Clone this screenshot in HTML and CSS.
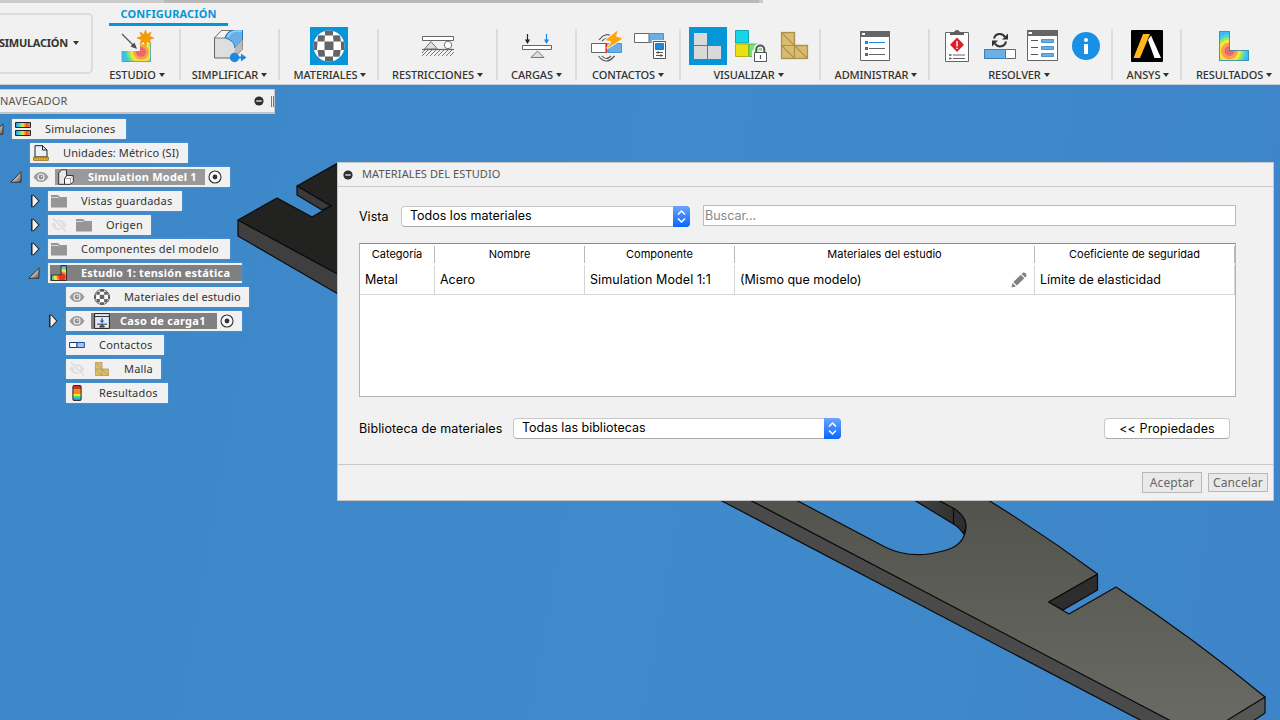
FILE: index.html
```html
<!DOCTYPE html>
<html lang="es">
<head>
<meta charset="utf-8">
<title>Simulación</title>
<link rel="stylesheet" href="styles.css">
</head>
<body>
<svg class="defs" width="0" height="0" aria-hidden="true">
  <defs>
    <linearGradient id="face" x1="0" y1="0" x2="0" y2="1"><stop offset="0" stop-color="#53534e"/><stop offset="1" stop-color="#6a6a64"/></linearGradient>
    <linearGradient id="wall" x1="0" y1="0" x2="1" y2="0"><stop offset="0" stop-color="#444"/><stop offset="1" stop-color="#2c2c2c"/></linearGradient>
    <linearGradient id="tri" x1="0" y1="0" x2="1" y2="1"><stop offset=".3" stop-color="#eee"/><stop offset="1" stop-color="#555"/></linearGradient>
    <linearGradient id="rain" x1="0" y1="0" x2="1" y2="0"><stop offset="0" stop-color="#1f8fe8"/><stop offset=".25" stop-color="#40d8c8"/><stop offset=".5" stop-color="#f3e622"/><stop offset=".75" stop-color="#f04a20"/><stop offset="1" stop-color="#f9a040"/></linearGradient>
    <symbol id="eye" viewBox="0 0 16 12"><path d="M.5 6C3 2 5.500 1 8 1s5 1 7.500 5C13 10 10.500 11 8 11S3 10 .5 6z" fill="#9a9a9a"/><circle cx="8" cy="6" r="3.600" fill="#f1f1f1"/><circle cx="8" cy="6" r="2.400" fill="#8e8e8e"/><circle cx="8.600" cy="5.400" r=".8" fill="#eee"/></symbol>
    <symbol id="eyeoff" viewBox="0 0 16 14"><path d="M.5 7C3 3 5.500 2 8 2s5 1 7.500 5C13 11 10.500 12 8 12S3 11 .5 7z" fill="#dedede"/><circle cx="8" cy="7" r="3.300" fill="#f1f1f1"/><circle cx="8" cy="7" r="1.800" fill="#dedede"/><path d="M2 1L14 13" stroke="#f1f1f1" stroke-width="3"/><path d="M2 .5L15 13.500" stroke="#dadada" stroke-width="1.300"/></symbol>
    <symbol id="folder" viewBox="0 0 16 14"><path d="M0 1H7L9 3H16V13.500H0z" fill="#969696"/><path d="M0 3.500H7.500" stroke="#d6d6d6"/></symbol>
    <symbol id="closed" viewBox="0 0 10 14"><path d="M1.500 1.200V12.800H3.500L9 7L3.500 1.200z" fill="#f2f2f2" stroke="#333" stroke-width="1.100"/><path d="M2 1.500V12.500" stroke="#222" stroke-width="1"/></symbol>
    <symbol id="open" viewBox="0 0 12 12"><path d="M11 .8V11.200H.8z" fill="url(#tri)" stroke="#333"/></symbol>
    <symbol id="radio" viewBox="0 0 14 14"><circle cx="7" cy="7" r="6" fill="#fafafa" stroke="#333" stroke-width="1.100"/><circle cx="7" cy="7" r="2.400" fill="#333"/></symbol>
    <symbol id="minus" viewBox="0 0 10 10"><circle cx="5" cy="5" r="4.600" fill="#2e2e2e"/><path d="M2.300 5H7.700" stroke="#f1f1f1" stroke-width="1.300"/></symbol>
    <symbol id="ball" viewBox="0 0 32 32">
      <clipPath id="disc"><circle cx="16" cy="16" r="15.500"/></clipPath>
      <circle cx="16" cy="16" r="15.500" fill="#fff"/>
      <g clip-path="url(#disc)" fill="#656565">
        <path d="M12 0H20V5.500H12zM5 5.500Q8 5 12 5.500L11.500 11.500H4.500zM20 5.500Q24 5 27 5.500L28 11.500H20.500z"/>
        <path d="M0 11.500H4.500L4 20H0zM11.500 11.500H20.500V20H11.500zM28 11.500H32V20H28z"/>
        <path d="M4.500 20H11.500L12 26.500Q8 27 5.500 26.500zM20.500 20H27.800L26.500 26.500Q24 27 20 26.500zM12 26.500H20V32H12z"/>
      </g>
    </symbol>
    <symbol id="mesh" viewBox="0 0 28 28"><path d="M1 1H14V14H27V27H1z" fill="#d9bd6c" stroke="#ad9150" stroke-width="1.400"/><path d="M1 1L27 27M1 14H14V27M1 14L14 27M14 1" fill="none" stroke="#ad9150" stroke-width="1.200"/></symbol>
  </defs>
</svg>

<header class="toolbar">
  <div class="strip"><i></i><b></b></div>
  <button class="workspace">SIMULACIÓN <span class="caret"></span></button>
  <div class="ribbon">
    <div class="tab">CONFIGURACIÓN</div>
    <div class="groups">
      <section class="group">
        <div class="icons"><svg viewBox="0 0 38 38">
          <clipPath id="l1"><path d="M4 24H22V17H33V35H4z"/></clipPath>
          <g clip-path="url(#l1)"><path d="M4 16H33V35H4z" fill="#35c3f0"/><circle cx="23" cy="25" r="15" fill="#5fdc9a"/><circle cx="23" cy="25" r="12.500" fill="#b7e34b"/><circle cx="23" cy="25" r="10.500" fill="#f4e23c"/><circle cx="23" cy="25" r="7.800" fill="#f9a04f"/><circle cx="23" cy="25" r="5" fill="#ea6868"/></g>
          <path d="M4 24V34.500H32.500V17" fill="none" stroke="#4aa0c0" stroke-width=".8"/>
          <path d="M4 7L17 20" stroke="#555" stroke-width="1.200"/><path d="M19 22L12.500 19.500L16.500 15.500z" fill="#4d4d4d"/>
          <path d="M27.500 3l1.600 4.500 4-2.500-1.600 4.300 4.500 1.700-4.500 1.700 1.600 4.300-4-2.500-1.600 4.500-1.600-4.500-4 2.500 1.600-4.300-4.500-1.700 4.500-1.700-1.600-4.300 4 2.500z" fill="#f59c00" stroke="#dd8500" stroke-width=".5"/>
        </svg></div>
        <h3>ESTUDIO<span class="caret"></span></h3>
      </section>
      <section class="group">
        <div class="icons"><svg viewBox="0 0 38 38">
          <path d="M3.500 11L10.500 3.500H31.500V22L23 31H3.500z" fill="#dedede" stroke="#666"/>
          <path d="M3.500 11L10.500 3.500H22Q15 5 14 11z" fill="#f5f5f5" stroke="#666" stroke-width=".8"/>
          <path d="M14 11Q16 4 22 3.500H31.500V12L24 21Q23 13 14 11z" fill="#69b0e8" stroke="#1d74b8" stroke-width=".9"/>
          <path d="M24 21L31.500 12V22L23 31z" fill="#bbb"/><path d="M17 10Q19 5 24 4H31" fill="none" stroke="#a5d2f5" stroke-width="1.500"/>
          <circle cx="23.500" cy="30.500" r="4.700" fill="#1c88e0"/><path d="M26 29.500H30V26.500L35.500 30.500L30 34.500V31.500H26z" fill="#1c88e0"/>
        </svg></div>
        <h3>SIMPLIFICAR<span class="caret"></span></h3>
      </section>
      <section class="group">
        <div class="icons"><svg class="on" viewBox="0 0 38 38"><use href="#ball" x="3" y="3" width="32" height="32"/></svg></div>
        <h3 class="right">MATERIALES<span class="caret"></span></h3>
      </section>
      <section class="group">
        <div class="icons"><svg viewBox="0 0 38 38">
          <path d="M3.500 9.500H34.500V13.500H3.500z" fill="#fff" stroke="#666"/>
          <path d="M12 14.500L18.500 22H5.500z" fill="#ddd" stroke="#777"/><circle cx="29" cy="18" r="3.700" fill="#fff" stroke="#777"/>
          <path d="M3 22.500H35" stroke="#666" stroke-width="1.200"/>
          <path d="M3 26l3-3M3 29l6-6M7 29l6-6M11 29l6-6M15 29l6-6M19 29l6-6M23 29l6-6M27 29l6-6M31 29l4-4" stroke="#777"/>
        </svg></div>
        <h3>RESTRICCIONES<span class="caret"></span></h3>
      </section>
      <section class="group">
        <div class="icons"><svg viewBox="0 0 38 38">
          <path d="M4.500 18.500H33.500V22.500H4.500z" fill="#fff" stroke="#666"/><path d="M19.500 24L26 30.500H13z" fill="#ddd" stroke="#777"/>
          <path d="M9.500 7V14" stroke="#222" stroke-width="1.200"/><path d="M7 12.500H12L9.500 17z" fill="#222"/>
          <path d="M28.500 7V14" stroke="#1c88e0" stroke-width="1.200"/><path d="M26 12.500H31L28.500 17z" fill="#1c88e0"/>
        </svg></div>
        <h3>CARGAS<span class="caret"></span></h3>
      </section>
      <section class="group">
        <div class="icons"><svg viewBox="0 0 38 38">
          <path d="M3.500 16.500H18V25.500H3.500z" fill="#fff" stroke="#666"/><path d="M20 16.500H33.500V25.500H20z" fill="#69b0e8" stroke="#4b93cc"/>
          <path d="M18.600 16V26" stroke="#d82424" stroke-width="1.400"/>
          <path d="M11 13Q18 4 25 10M14 14Q18 10 22 12M10.500 29Q18 39 26.500 29M14 29Q18 34 23 29" fill="none" stroke="#555" stroke-width="1.200"/>
          <path d="M29.500 3.500L17.500 13L23.500 14.500L19 21.500L34.500 11.500L28 9.500z" fill="#ffa50a" stroke="#f1f1f1" stroke-width="2" paint-order="stroke"/>
        </svg><svg viewBox="0 0 38 38">
          <path d="M3.500 6.500H18V15.500H3.500z" fill="#fff" stroke="#666"/><path d="M18.500 6.500H32.500V15.500H18.500z" fill="#69b0e8" stroke="#4b93cc"/>
          <path d="M21 13H36V33H21z" fill="#f1f1f1"/><path d="M22.500 14.500H34.500V31.500H22.500z" fill="#fff" stroke="#555"/><path d="M24.500 16.500H32.500V22.500H24.500z" fill="#1c88e0" stroke="#1664a8" stroke-width=".8"/>
          <path d="M25 25.500H32M25 28.500H32M27 24V27M30 27V30" stroke="#555"/>
        </svg></div>
        <h3>CONTACTOS<span class="caret"></span></h3>
      </section>
      <section class="group wide">
        <div class="icons"><svg class="on" viewBox="0 0 38 38"><path d="M5 6H18V18H5zM5 19H18V32H5zM19 19H32V32H19z" fill="#d9d9d9"/></svg><svg viewBox="0 0 38 38">
          <path d="M3.500 3.500H16.500V16H3.500z" fill="#18d4e8" stroke="#12a5b8"/><path d="M3.500 17H16.500V29.500H3.500z" fill="#e8e015" stroke="#b8b010"/><path d="M17 17H29.500V29.500H17z" fill="#72e672" stroke="#54b854"/>
          <path d="M21.500 25V34.500H35V25z" fill="#fff" stroke="#f1f1f1" stroke-width="3"/><path d="M24 26V22.500a4.200 4.200 0 0 1 8.400 0V26" fill="none" stroke="#f1f1f1" stroke-width="5"/><path d="M24.300 26V22.500a4 4 0 0 1 8 0V26" fill="none" stroke="#555" stroke-width="2"/><path d="M22.500 25.500H34.500V34.500H22.500z" fill="#fff" stroke="#555"/><path d="M28.500 28V32" stroke="#555" stroke-width="1.200"/>
        </svg><svg viewBox="0 0 38 38"><use href="#mesh" x="5.500" y="4.500" width="28" height="28"/></svg></div>
        <h3>VISUALIZAR<span class="caret"></span></h3>
      </section>
      <section class="group">
        <div class="icons"><svg viewBox="0 0 38 38">
          <path d="M4.500 4.500H33.500V33.500H4.500z" fill="#fff" stroke="#666"/><path d="M4 4H34V10H4z" fill="#666"/><path d="M6 6H9V8H6z" fill="#fff"/>
          <path d="M9 14H12V17H9z" fill="#1c88e0"/><path d="M9 20H12V23H9zM9 26H12V29H9z" fill="#666"/><path d="M13 15.500H29" stroke="#1c88e0"/><path d="M13 21.500H29M13 27.500H29" stroke="#666"/>
        </svg></div>
        <h3 class="right">ADMINISTRAR<span class="caret"></span></h3>
      </section>
      <section class="group wide">
        <div class="icons"><svg viewBox="0 0 38 38">
          <path d="M7.500 5.500H30.500V34.500H7.500z" fill="#fff" stroke="#666"/><path d="M12 8V6L16 5Q17 3 19 3T22 5L26 6V8z" fill="#5e5e5e"/>
          <path d="M19 10.500L26 17.800L19 25L12 17.800z" fill="#de1f26"/><path d="M19 14V19.500M19 20.800V22" stroke="#fff" stroke-width="1.500"/><path d="M11 28H13.500M11 31.500H13.500" stroke="#555" stroke-width="1.500"/><path d="M15 28H27M15 31.500H27" stroke="#666"/>
        </svg><svg viewBox="0 0 38 38">
          <path d="M13 11.500A6 6 0 0 1 24 10M25 14.500A6 6 0 0 1 14 16.500" fill="none" stroke="#333" stroke-width="2"/><path d="M27 6.500V12.500H21zM11 19.500V13.500H17z" fill="#333"/>
          <path d="M3.500 22.500H34.500V31.500H3.500z" fill="#fff" stroke="#666"/><path d="M3.500 22.500H24.500V31.500H3.500z" fill="#69b0e8" stroke="#3d7fb5"/>
        </svg><svg viewBox="0 0 38 38">
          <path d="M3.500 3.500H33.500V33.500H3.500z" fill="#fff" stroke="#666"/><path d="M3 3H34V9H3z" fill="#666"/><path d="M4.500 5H8V7H4.500z" fill="#fff"/>
          <path d="M7 13.500H14M7 20.500H14M7 27.500H14" stroke="#555"/><path d="M17.500 12.500H29.500V15.500H17.500zM17.500 19.500H29.500V22.500H17.500zM17.500 26.500H29.500V29.500H17.500z" fill="#69b0e8" stroke="#4b93cc"/>
        </svg><svg viewBox="0 0 38 38"><circle cx="19" cy="19" r="14" fill="#1a8fe6"/><circle cx="19" cy="13" r="2" fill="#fff"/><path d="M17 17H21V27H17z" fill="#fff"/></svg></div>
        <h3>RESOLVER<span class="caret"></span></h3>
      </section>
      <section class="group">
        <div class="icons"><svg viewBox="0 0 38 38"><rect x="3" y="3" width="32" height="32" rx="1" fill="#000"/><path d="M15 7H22L12 31H5.500z" fill="#ffb71b"/><path d="M20 13L23 8.500L33 31H26.500z" fill="#fff"/></svg></div>
        <h3 class="right">ANSYS<span class="caret"></span></h3>
      </section>
      <section class="group">
        <div class="icons"><svg viewBox="0 0 38 38">
          <clipPath id="l2"><path d="M4 4H15V23H34V34H4z"/></clipPath>
          <g clip-path="url(#l2)"><path d="M4 4H34V34H4z" fill="#43b7f4"/><circle cx="14.500" cy="24" r="17" fill="#3fd8e0"/><circle cx="14.500" cy="24" r="14" fill="#9fe45c"/><circle cx="14.500" cy="24" r="11.500" fill="#f4e83c"/><circle cx="14.500" cy="24" r="8.500" fill="#f9a04f"/><circle cx="14.500" cy="24" r="5" fill="#ea6868"/></g>
          <path d="M4.500 4.500H14.500V23.500H33.500V33.500H4.500z" fill="none" stroke="#3a8cab" stroke-width=".9"/>
        </svg></div>
        <h3>RESULTADOS<span class="caret"></span></h3>
      </section>
    </div>
  </div>
</header>

<main class="canvas">
  <svg class="model" viewBox="0 85 1280 635" width="1280" height="635">
    <clipPath id="visible"><path d="M0 85H337V720H0zM337 500H1280V720H337z"/></clipPath>
    <g clip-path="url(#visible)"><g stroke="#0b0b0b" stroke-width="1.200" stroke-linejoin="round">
      <path d="M238 220L345 278V298L238 236z" fill="#3f3f3f"/>
      <path d="M238 220L277 198L312 217L331 206L297 186L345 159V278z" fill="#222220"/>
      <path d="M297 186V195L322 210L331 206z" fill="#3a3a3a"/>
      <path d="M914 500L953.500 524Q960 528 963.500 534L966 527Q966 514 953 508L938 499z" fill="url(#wall)"/>
      <path d="M953.500 508V524" fill="none"/>
      <path d="M720 500L1142 721H1172L750 500z" fill="#4a4a4a"/>
      <path d="M1097.500 574V590L1063 610L1048.500 602z" fill="#2d2d2d"/>
      <path d="M1265 697V713L1250 723H1220z" fill="#565654"/>
      <path d="M750 500L1171 721H1226L1265 697Q1196 640 1116 587L1069 614L1048.500 602L1097.500 574Q1045 535 988 500H938L955 509Q967 518 966 527Q965 546 943 551Q911 560 885 547Q870 539 796 500z" fill="url(#face)"/>
    </g></g>
  </svg>

  <aside class="browser">
    <div class="browser-head"><span>NAVEGADOR</span><svg class="dot"><use href="#minus"/></svg><i></i></div>
    <ul class="tree">
      <li class="d0"><svg class="tw open"><use href="#open"/></svg><div class="chip w114"><svg class="ic" viewBox="0 0 16 16"><path d="M.5 1.500H15.500V6.500H.5zM.5 9.500H15.500V14.500H.5z" fill="url(#rain)" stroke="#223"/></svg><span>Simulaciones</span></div></li>
      <li class="d1"><span class="tw"></span><div class="chip w158"><svg class="ic" viewBox="0 0 16 16"><path d="M2 .7H9.500L14 5V12H2z" fill="#eaf0f8" stroke="#222"/><path d="M9.500 .7V5H14" fill="none" stroke="#222"/><path d="M.7 12H15.300V15.300H.7z" fill="#f5b921" stroke="#7c5400" stroke-width=".8"/><path d="M3 12.500v1.500M5.500 12.500v1.500M8 12.500v1.500M10.500 12.500v1.500M13 12.500v1.500" stroke="#7c5400" stroke-width=".6"/></svg><span class="tight">Unidades: Métrico (SI)</span></div></li>
      <li class="d1"><svg class="tw open"><use href="#open"/></svg><div class="chip w200"><svg class="eye"><use href="#eye"/></svg><div class="sel s150"><svg class="ic" viewBox="0 0 16 16"><path d="M.7 4L3.500 .8H8.500V6.500L6.500 15.300H.7z" fill="#e8e8e8" stroke="#333"/><path d="M6.500 9.500L9 6.500H15.300V12.500L12.500 15.300H6.500z" fill="#fff" stroke="#333"/><path d="M6.500 9.500H12.500L15.300 6.500M12.500 9.500V15" fill="none" stroke="#777" stroke-width=".7"/></svg><b>Simulation Model 1</b></div><svg class="rad"><use href="#radio"/></svg></div></li>
      <li class="d2"><svg class="tw"><use href="#closed"/></svg><div class="chip w134"><svg class="ic"><use href="#folder"/></svg><span>Vistas guardadas</span></div></li>
      <li class="d2"><svg class="tw"><use href="#closed"/></svg><div class="chip w103"><svg class="eye"><use href="#eyeoff"/></svg><svg class="ic second"><use href="#folder"/></svg><span>Origen</span></div></li>
      <li class="d2"><svg class="tw"><use href="#closed"/></svg><div class="chip w182"><svg class="ic"><use href="#folder"/></svg><span>Componentes del modelo</span></div></li>
      <li class="d2"><svg class="tw open"><use href="#open"/></svg><div class="chip w194 full"><div class="sel"><svg class="ic" viewBox="0 0 16 16"><clipPath id="l3"><path d="M10 .5H15.500V15.500H.5V10H10z"/></clipPath><g clip-path="url(#l3)"><path d="M0 0H16V16H0z" fill="#2d9ce8"/><circle cx="11" cy="12" r="10" fill="#4fd8b8"/><circle cx="11" cy="12" r="8" fill="#f5e72d"/><circle cx="11" cy="12" r="5.500" fill="#f98a2d"/><circle cx="11" cy="12" r="3.500" fill="#ee2e24"/></g><path d="M10 .5H15.500V15.500H.5V10H10z" fill="none" stroke="#333"/></svg><b>Estudio 1: tensión estática</b></div></div></li>
      <li class="d3"><span class="tw"></span><div class="chip w183"><svg class="eye"><use href="#eye"/></svg><svg class="ic second" viewBox="0 0 16 16"><use href="#ball" width="16" height="16"/><circle cx="8" cy="8" r="7.500" fill="none" stroke="#444" stroke-width=".8"/></svg><span class="tight">Materiales del estudio</span></div></li>
      <li class="d3"><svg class="tw"><use href="#closed"/></svg><div class="chip w176"><svg class="eye"><use href="#eye"/></svg><div class="sel s126"><svg class="ic" viewBox="0 0 16 16"><path d="M.6 .6H15.400V15.400H.6z" fill="#e4e8f2" stroke="#222"/><path d="M1 3.500H15" stroke="#333"/><path d="M8 5V9" stroke="#1c58c8" stroke-width="1.300"/><path d="M5.800 7.500H10.200L8 10.300z" fill="#1c58c8"/><path d="M3 11.200H13M5.500 14L8 11.500L10.500 14z" fill="#555" stroke="#333"/></svg><b>Caso de carga1</b></div><svg class="rad"><use href="#radio"/></svg></div></li>
      <li class="d3"><span class="tw"></span><div class="chip w98"><svg class="ic" viewBox="0 0 16 16"><path d="M.6 5.500H8V10.500H.6z" fill="#fff" stroke="#123a7c"/><path d="M8 5.500H15.400V10.500H8z" fill="#9fc5f0" stroke="#1d4fa8"/></svg><span>Contactos</span></div></li>
      <li class="d3"><span class="tw"></span><div class="chip w95"><svg class="eye"><use href="#eyeoff"/></svg><svg class="ic second" viewBox="0 0 16 16"><use href="#mesh" x="1" y="1" width="14" height="14"/></svg><span>Malla</span></div></li>
      <li class="d3"><span class="tw"></span><div class="chip w102"><svg class="ic" viewBox="0 0 16 16"><path d="M4 .5H12V4.500H4z" fill="#d22f2f"/><path d="M4 4.500H12V9H4z" fill="#f08c1e"/><path d="M4 9H12V11H4z" fill="#f5e62d"/><path d="M4 11H12V13H4z" fill="#5ad85a"/><path d="M4 13H12V15.500H4z" fill="#22a8f0"/><rect x="3.900" y=".6" width="8.200" height="14.800" rx="1" fill="none" stroke="#222"/></svg><span>Resultados</span></div></li>
    </ul>
  </aside>

  <div class="dialog">
    <div class="dialog-head"><svg class="dot"><use href="#minus"/></svg><span>MATERIALES DEL ESTUDIO</span></div>
    <div class="dialog-body">
      <div class="row top">
        <label class="vista">Vista</label>
        <div class="select view"><span>Todos los materiales</span><i><svg viewBox="0 0 17 21"><path d="M5 8.500L8.500 5L12 8.500M5 12.500L8.500 16L12 12.500" fill="none" stroke="#fff" stroke-width="1.500"/></svg></i></div>
        <input class="search" placeholder="Buscar...">
      </div>
      <div class="table">
        <div class="th"><span>Categoría</span><span>Nombre</span><span>Componente</span><span>Materiales del estudio</span><span>Coeficiente de seguridad</span></div>
        <div class="td"><span>Metal</span><span>Acero</span><span class="loose">Simulation Model 1:1</span><span>(Mismo que modelo)<svg class="pen" viewBox="0 0 16 16"><path d="M.5 15.500L1.500 11L5 14.500zM2.300 10L9.800 2.700L13.300 6.200L5.900 13.600zM10.600 1.900L12 .6Q13.300 0 14.600 1.300T15.400 4L14.100 5.400z" fill="#808080"/></svg></span><span>Límite de elasticidad</span></div>
      </div>
      <div class="row lib">
        <label class="biblio loose">Biblioteca de materiales</label>
        <div class="select library"><span>Todas las bibliotecas</span><i><svg viewBox="0 0 17 21"><path d="M5 8.500L8.500 5L12 8.500M5 12.500L8.500 16L12 12.500" fill="none" stroke="#fff" stroke-width="1.500"/></svg></i></div>
        <button class="props loose">&lt;&lt; Propiedades</button>
      </div>
    </div>
    <div class="dialog-foot"><button class="ok">Aceptar</button><button class="cancel">Cancelar</button></div>
  </div>
</main>
</body>
</html>
```
FILE: styles.css
```css
* { box-sizing: border-box; }
body { margin: 0; width: 1280px; height: 720px; overflow: hidden; display: flex; flex-direction: column; font-family: "Noto Sans", "Open Sans", sans-serif; font-size: 11px; color: #333; background: #3e88c8; }
button, input { font: inherit; margin: 0; }
.defs { position: absolute; }

.toolbar { position: relative; height: 85px; flex: none; display: flex; background: #f1f1f1; border-bottom: 1px solid #c4cdd6; }
.strip { position: absolute; left: 0; top: 0; width: 763px; height: 3px; display: flex; background: #b9b9b9; }
.strip i { width: 164px; background: #cbcbcb; }
.strip b { width: 4px; margin-left: auto; background: #cbcbcb; }
.workspace { flex: none; width: 93px; height: 61px; margin-top: 13px; padding: 0 12px 2px 0; display: flex; align-items: center; justify-content: flex-end; gap: 5px; border: 2px solid #dcdcdc; border-left: 0; border-radius: 0 5px 5px 0; background: #f1f1f1; color: #333; font-weight: 700; letter-spacing: -.25px; white-space: nowrap; }
.caret { display: inline-block; flex: none; border: 3px solid transparent; border-top: 4px solid #333; border-bottom: 0; }
.ribbon { flex: none; width: 1194px; margin-left: 2px; display: flex; flex-direction: column; }
.tab { width: 119px; height: 23px; margin: 3px 0 0 14px; border-bottom: 3px solid #0696d7; color: #0696d7; font-weight: 700; line-height: 22px; text-align: center; letter-spacing: .1px; white-space: nowrap; }
.groups { display: grid; grid-template-columns: 86px 99px 99px 119px 79px 104px 140px 109px 183px 69px 106px; margin-top: 1px; }
.group { position: relative; height: 56px; display: flex; flex-direction: column; align-items: center; padding-right: 2px; }
.group:not(:last-child)::after { content: ""; position: absolute; right: 0; top: 2px; width: 2px; height: 51px; background: #dcdcdc; }
.icons { display: flex; gap: 5px; }
.icons svg { width: 38px; height: 38px; display: block; }
.icons .on { background: #0696d7; }
h3 { margin: 2px 0 0; display: flex; align-items: center; gap: 3px; font-size: 11px; font-weight: 500; line-height: 16px; letter-spacing: -.1px; white-space: nowrap; color: #333; }
h3.right { padding-left: 3px; }
.wide .icons { margin-left: 2px; }
.wide h3 { padding-right: 3px; }

.canvas { position: relative; flex: 1; background: linear-gradient(100deg, #3c87c8, #408acb 50%, #3d85c8); }
.model { position: absolute; left: 0; top: 0; }

.browser { position: absolute; left: 0; top: 4px; width: 275px; }
.browser-head { height: 25px; display: flex; align-items: center; background: #f1f1f1; border: solid #c6c6c6; border-width: 1px 1px 2px 0; color: #555; }
.browser-head span { margin-top: -2px; letter-spacing: .15px; }
.browser-head i { width: 3px; height: 11px; margin: 0 0 0 7px; border: solid #777; border-width: 0 1px; }
.dot { width: 10px; height: 10px; }
.browser-head .dot { margin-left: auto; }
.tree { list-style: none; margin: 5px 0 0; padding: 0; display: flex; flex-direction: column; gap: 4px; }
.tree li { height: 20px; display: flex; align-items: center; }
.d0 { margin-left: -8px; }
.d1 { margin-left: 10px; }
.d2 { margin-left: 28px; }
.d3 { margin-left: 46px; }
.tw { flex: none; width: 10px; height: 14px; margin: 0 8px 0 2px; }
.tw.open { width: 12px; height: 12px; margin: 0 8px 0 0; }
.chip { height: 20px; display: flex; align-items: center; padding-left: 3px; background: #f1f1f1; white-space: nowrap; letter-spacing: .2px; box-shadow: 0 0 3px rgba(130, 180, 230, .35); }
.chip .ic, .chip .eye { flex: none; width: 16px; height: 16px; }
.chip span { margin: -2px 0 0 14px; }
.chip .tight { letter-spacing: .12px; }
.chip .second { margin-left: 9px; }
.sel { height: 16px; display: flex; align-items: center; margin-left: 6px; padding-left: 3px; background: #999; color: #fff; }
.sel b { margin: -2px 0 0 14px; }
.s126 { width: 126px; background: #808080; }
.s126 b { margin-left: 10px; letter-spacing: .25px; }
.s150 { width: 150px; }
.full { padding-left: 2px; }
.full .sel { flex: 1; margin-left: 0; padding-left: 1px; background: #808080; }
.rad { width: 14px; height: 14px; margin-left: 3px; }
.w114 { width: 114px; }
.w158 { width: 158px; }
.w200 { width: 200px; }
.w134 { width: 134px; }
.w103 { width: 103px; }
.w182 { width: 182px; }
.w194 { width: 194px; }
.w183 { width: 183px; }
.w176 { width: 176px; }
.w98 { width: 98px; }
.w95 { width: 95px; }
.w102 { width: 102px; }

.dialog { position: absolute; left: 337px; top: 77px; width: 937px; height: 339px; display: flex; flex-direction: column; background: #f1f1f1; border: 1px solid #c6c6c6; }
.dialog-head { height: 24px; display: flex; align-items: center; gap: 9px; padding-left: 5px; border-bottom: 1px solid #c9c9c9; color: #555; }
.dialog-head span { margin-top: -2px; letter-spacing: .1px; }
.dialog-body { flex: 1; padding: 18px 37px 0 21px; font-family: Inter, sans-serif; font-size: 12.5px; color: #000; }
.loose { letter-spacing: .1px; }
.row { display: flex; align-items: center; height: 21px; white-space: nowrap; }
.top { height: 22px; }
.vista { width: 42px; }
.select { display: flex; height: 21px; border: 1px solid #c8c8c8; border-bottom-color: #aaa; border-radius: 4px; background: #fff; line-height: 18px; padding-left: 8px; }
.select i { width: 17px; height: 21px; margin: -1px -1px 0 auto; border-radius: 0 4px 4px 0; background: linear-gradient(#6aa5fa, #0a66ff); }
.select svg { display: block; width: 17px; height: 21px; }
.view { width: 289px; }
.search { width: 533px; height: 21px; margin: -1px 0 0 13px; padding: 1px; border: 1px solid #bcbcbc; background: #fff; }
.search::placeholder { color: #888; opacity: 1; }
.table { width: 877px; height: 154px; margin-top: 16px; background: #fff; border: 1px solid #b4b4b4; border-top-color: #8a8a8a; }
.th, .td { display: grid; grid-template-columns: 75px 150px 150px 300px 200px; white-space: nowrap; }
.th { margin-top: 2px; height: 17px; font-size: 11px; line-height: 16px; text-align: center; }
.th span { border-right: 1px solid #b8b8b8; }
.td { margin-top: 2px; height: 30px; line-height: 28px; border-bottom: 1px solid #d5d5d5; }
.td span { display: flex; align-items: center; padding-left: 5px; border-right: 1px solid #d5d5d5; }
.pen { width: 16px; height: 16px; margin: 0 7px 0 auto; }
.lib { margin-top: 21px; }
.biblio { width: 154px; }
.library { width: 328px; }
.props { width: 126px; height: 21px; margin-left: auto; margin-right: 6px; padding: 0; border: 1px solid #c8c8c8; border-bottom-color: #aaa; border-radius: 4px; background: #fff; color: #000; }
.dialog-foot { height: 36px; display: flex; align-items: center; justify-content: flex-end; gap: 6px; padding-right: 5px; border-top: 1px solid #c9c9c9; }
.dialog-foot button { width: 60px; height: 21px; padding: 0; border: 1px solid #b8b8b8; background: #e9e9e9; color: #666; font-size: 12px; line-height: 17px; letter-spacing: .1px; }
.dialog-foot .cancel { height: 19px; }
```
